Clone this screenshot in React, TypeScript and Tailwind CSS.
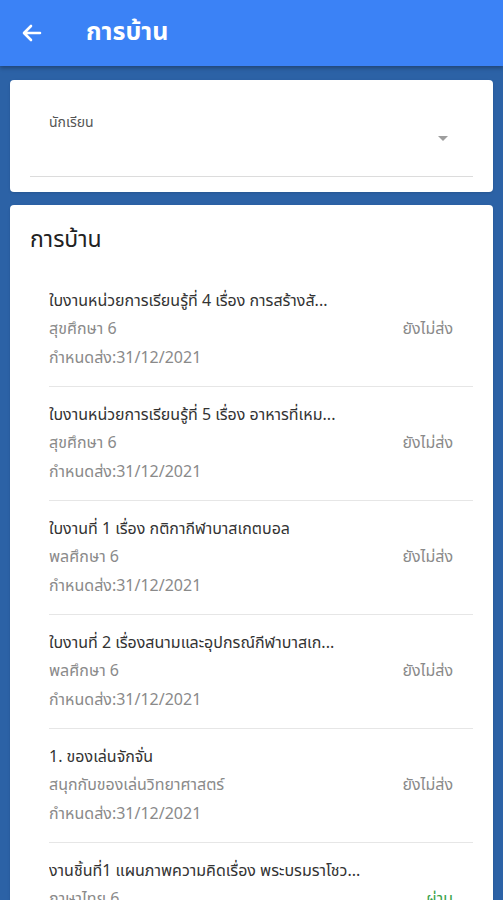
const items = [
  {
    title: "ใบงานหน่วยการเรียนรู้ที่ 4 เรื่อง การสร้างสั...",
    subject: "สุขศึกษา 6",
    due: "31/12/2021",
    status: "ยังไม่ส่ง",
    done: false,
  },
  {
    title: "ใบงานหน่วยการเรียนรู้ที่ 5 เรื่อง อาหารที่เหม...",
    subject: "สุขศึกษา 6",
    due: "31/12/2021",
    status: "ยังไม่ส่ง",
    done: false,
  },
  {
    title: "ใบงานที่ 1 เรื่อง กติกากีฬาบาสเกตบอล",
    subject: "พลศึกษา 6",
    due: "31/12/2021",
    status: "ยังไม่ส่ง",
    done: false,
  },
  {
    title: "ใบงานที่ 2 เรื่องสนามและอุปกรณ์กีฬาบาสเก...",
    subject: "พลศึกษา 6",
    due: "31/12/2021",
    status: "ยังไม่ส่ง",
    done: false,
  },
  {
    title: "1. ของเล่นจักจั่น",
    subject: "สนุกกับของเล่นวิทยาศาสตร์",
    due: "31/12/2021",
    status: "ยังไม่ส่ง",
    done: false,
  },
  {
    title: "งานชิ้นที่1 แผนภาพความคิดเรื่อง พระบรมราโชว...",
    subject: "ภาษาไทย 6",
    due: "31/12/2021",
    status: "ผ่าน",
    done: true,
  },
];

export default function App() {
  return (
    <div className="h-[900px] overflow-hidden bg-[#2c62a6] font-['Noto_Sans_Thai','Noto_Sans','DejaVu_Sans',sans-serif]">
      <header className="flex h-[66px] items-center bg-[#3b82f6] px-[20px] shadow-[0_2px_4px_rgba(0,0,0,0.3)]">
        <svg width="24" height="24" viewBox="0 0 24 24" fill="none" stroke="white" strokeWidth="2.6" strokeLinecap="round" strokeLinejoin="round">
          <path d="M20 12H4.5M11 5l-7 7 7 7" />
        </svg>
        <h1 className="ml-[42px] text-[25px] font-bold text-white">การบ้าน</h1>
      </header>

      <div className="flex flex-col gap-[13px] px-[10px] pt-[14px]">
        <section className="rounded-[4px] bg-white px-[20px] pt-[34px] pb-[15px] shadow">
          <div className="pl-[19px] text-[14px] leading-[18px] text-[#555]">นักเรียน</div>
          <div className="flex h-[22px] justify-end pr-[25px]">
            <span className="mt-[4px] h-0 w-0 border-x-[5px] border-t-[5px] border-x-transparent border-t-[#9e9e9e]" />
          </div>
          <div className="mt-[22px] h-px bg-[#dcdcdc]" />
        </section>

        <section className="rounded-[4px] bg-white px-[20px] pt-[19px] shadow">
          <h2 className="text-[23px] leading-[32px] text-[#222]">การบ้าน</h2>
          <ul className="mt-[17px] pl-[19px]">
            {items.map((it) => (
              <li key={it.title} className="border-b border-[#e6e6e6] pt-[14px] pb-[14px]">
                <div className="truncate pr-[100px] text-[16px] leading-[28px] text-[#333]">{it.title}</div>
                <div className="flex justify-between pr-[20px] text-[16px] leading-[29px] text-[#8a8a8a]">
                  <span>{it.subject}</span>
                  <span className={it.done ? "text-[#3aa34a]" : ""}>{it.status}</span>
                </div>
                <div className="text-[16px] leading-[28px] text-[#8a8a8a]">กำหนดส่ง:{it.due}</div>
              </li>
            ))}
          </ul>
        </section>
      </div>
    </div>
  );
}
